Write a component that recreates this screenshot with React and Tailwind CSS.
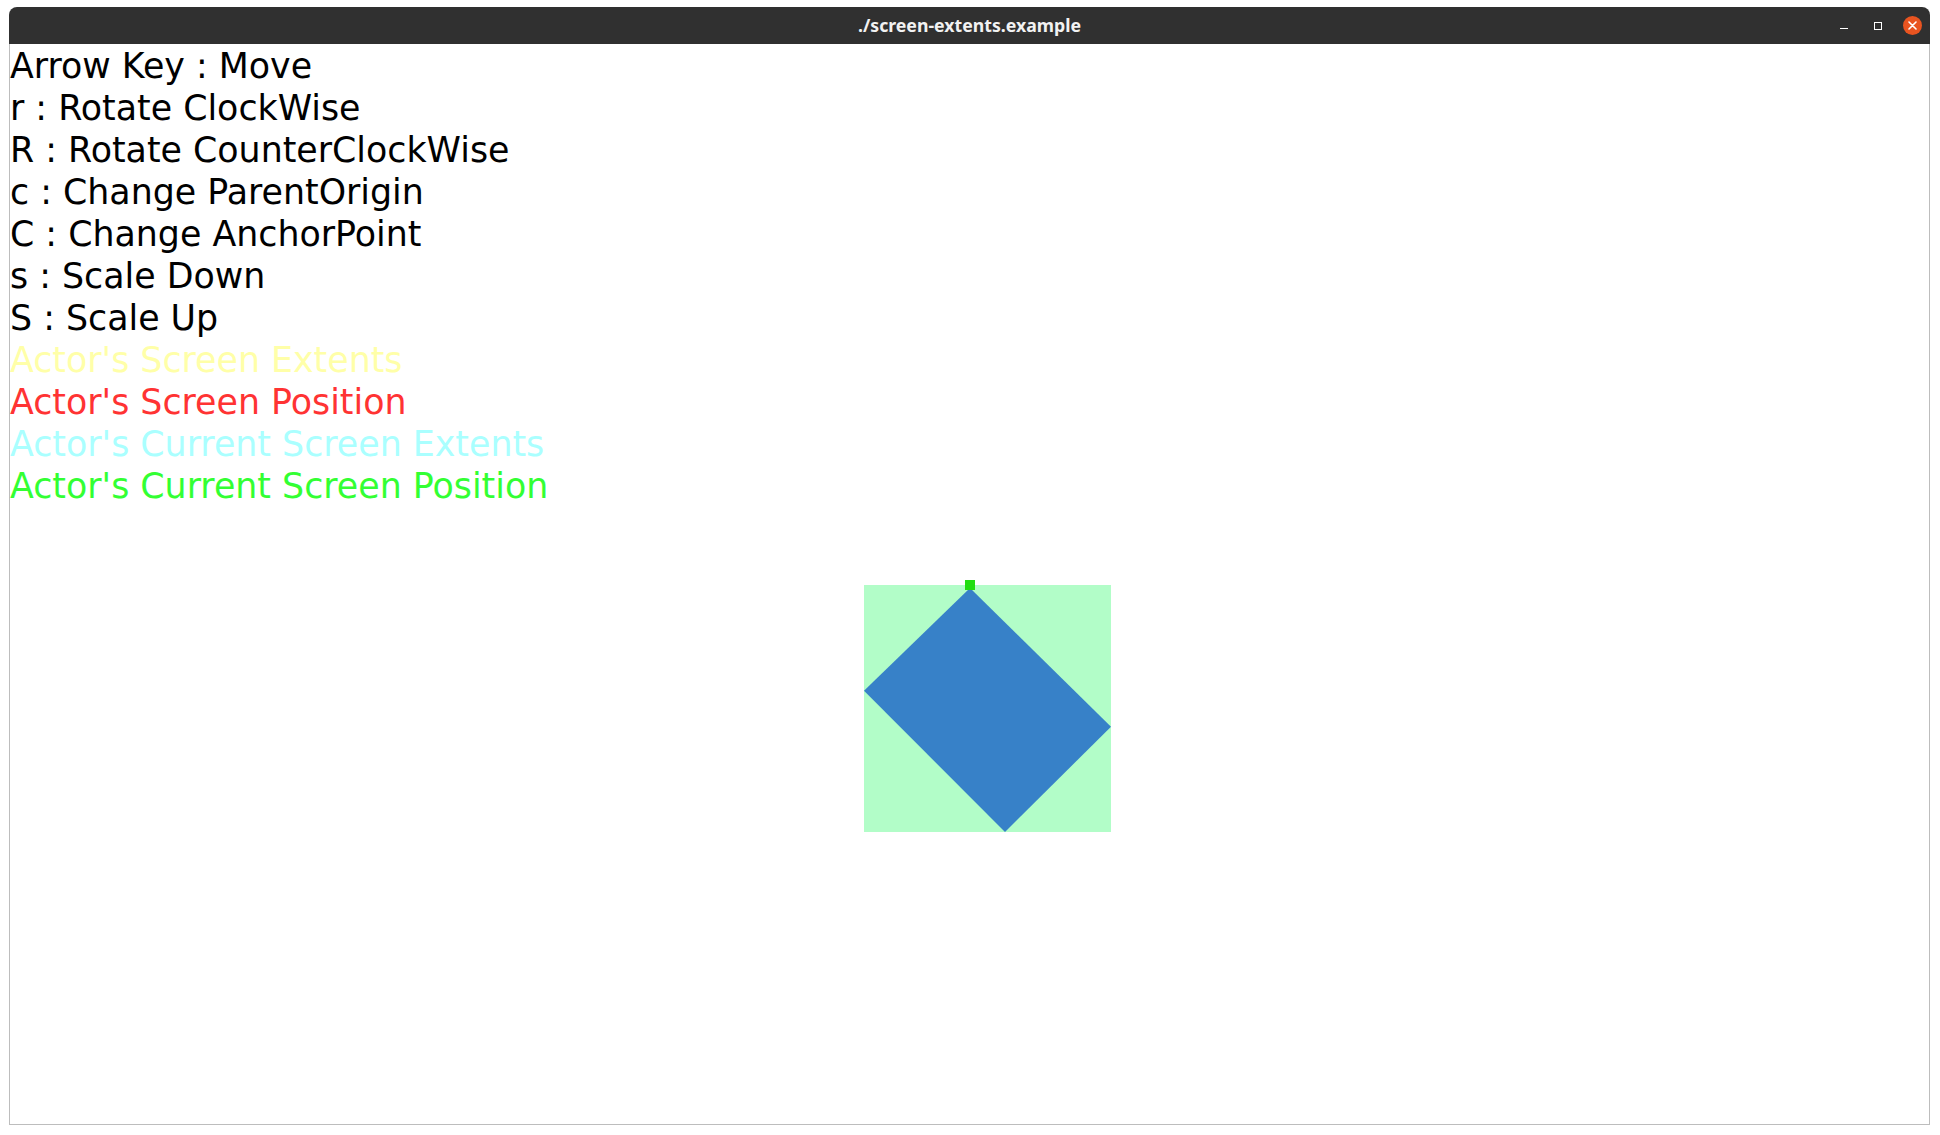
import React from 'react';

const lines = [
  { text: 'Arrow Key : Move', color: 'text-black' },
  { text: 'r : Rotate ClockWise', color: 'text-black' },
  { text: 'R : Rotate CounterClockWise', color: 'text-black' },
  { text: 'c : Change ParentOrigin', color: 'text-black' },
  { text: 'C : Change AnchorPoint', color: 'text-black' },
  { text: 's : Scale Down', color: 'text-black' },
  { text: 'S : Scale Up', color: 'text-black' },
  { text: "Actor's Screen Extents", color: 'text-[#ffffa8]' },
  { text: "Actor's Screen Position", color: 'text-[#ff3333]' },
  { text: "Actor's Current Screen Extents", color: 'text-[#aaffff]' },
  { text: "Actor's Current Screen Position", color: 'text-[#33ff33]' },
];

function TitleBar() {
  return (
    <div className="relative flex h-[37px] items-center justify-center rounded-t-[8px] bg-[#303030]">
      <span className="font-['Noto_Sans',sans-serif] text-[17.7px] font-bold text-[#f2f2f2]">
        ./screen-extents.example
      </span>
      <div className="absolute right-[8px] top-0 flex h-[37px] items-center">
        <div className="mt-[6px] h-px w-[8px] bg-white" />
        <div className="ml-[26px] h-[8px] w-[8px] border border-white" />
        <div className="ml-[21px] flex h-[19px] w-[19px] items-center justify-center rounded-full bg-[#e95420]">
          <svg width="9" height="9" viewBox="0 0 9 9">
            <path d="M1 1 L8 8 M8 1 L1 8" stroke="white" strokeWidth="1.6" strokeLinecap="round" />
          </svg>
        </div>
      </div>
    </div>
  );
}

function Actor() {
  return (
    <svg className="absolute left-[854px] top-[536px]" width="248" height="253" viewBox="0 0 248 253">
      <rect x="0" y="5" width="247" height="247" fill="#b2fdc8" />
      <polygon points="106,8 247,146.7 141,252 0,110.7" fill="#3781c8" />
      <rect x="101" y="0" width="10" height="10" fill="#22dd11" />
    </svg>
  );
}

export default function App() {
  return (
    <div className="min-h-screen w-full bg-white pl-[9px] pt-[7px]">
      <div className="flex h-[1118px] w-[1921px] flex-col">
        <TitleBar />
        <div className="relative flex-1 border-x border-b border-[#bdbdbd] bg-white">
          <div className="pt-px font-['DejaVu_Sans',sans-serif] text-[34.8px] leading-[42px]">
            {lines.map((line) => (
              <div key={line.text} className={`whitespace-pre ${line.color}`}>
                {line.text}
              </div>
            ))}
          </div>
          <Actor />
        </div>
      </div>
    </div>
  );
}
